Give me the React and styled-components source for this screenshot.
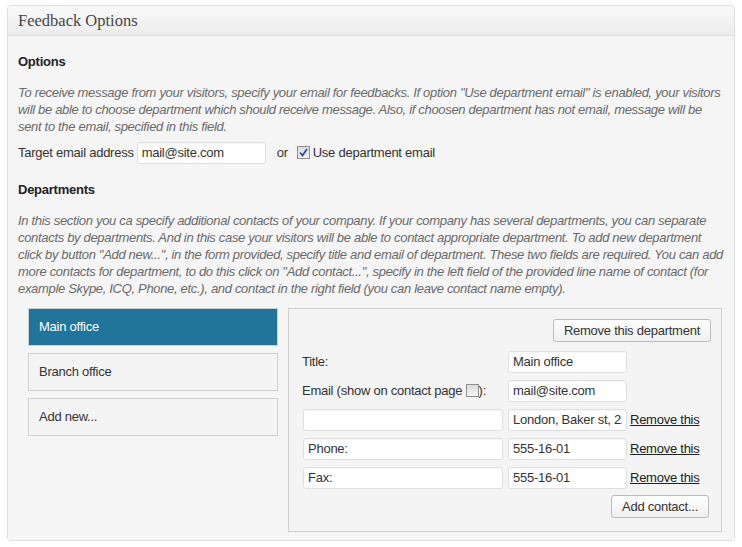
import React from "react";
import styled, { createGlobalStyle } from "styled-components";

const GlobalStyle = createGlobalStyle`
  body {
    margin: 0;
    background: #ffffff;
    font-family: "Liberation Sans", Arial, sans-serif;
    font-size: 13px;
    letter-spacing: -0.25px;
    color: #333;
  }
`;

const optionsText = [
  'To receive message from your visitors, specify your email for feedbacks. If option "Use department email" is enabled, your visitors',
  "will be able to choose department which should receive message. Also, if choosen department has not email, message will be",
  "sent to the email, specified in this field.",
];

const departmentsText = [
  "In this section you ca specify additional contacts of your company. If your company has several departments, you can separate",
  "contacts by departments. And in this case your visitors will be able to contact appropriate department. To add new department",
  'click by button "Add new...", in the form provided, specify title and email of department. These two fields are required. You can add',
  'more contacts for department, to do this click on "Add contact...", specify in the left field of the provided line name of contact (for',
  "example Skype, ICQ, Phone, etc.), and contact in the right field (you can leave contact name empty).",
];

const contacts = [
  { name: "", value: "London, Baker st, 221b" },
  { name: "Phone:", value: "555-16-01" },
  { name: "Fax:", value: "555-16-01" },
];

function Check({ checked }) {
  return (
    <CheckBox>
      {checked && (
        <svg width="9" height="9" viewBox="0 0 9 9">
          <path d="M1 4.5 L3.5 7.5 L8 1" fill="none" stroke="#2a4fa8" strokeWidth="1.8" />
        </svg>
      )}
    </CheckBox>
  );
}

function Description({ lines }) {
  return (
    <Desc>
      {lines.map((l, i) => (
        <Line key={i}>{l}</Line>
      ))}
    </Desc>
  );
}

export default function App() {
  return (
    <>
      <GlobalStyle />
      <Box>
        <Header>Feedback Options</Header>
        <Body>
          <Heading>Options</Heading>
          <Description lines={optionsText} />
          <TargetRow>
            <span>Target email address</span>
            <Input $width="129px" defaultValue="mail@site.com" />
            <Or>or</Or>
            <Check checked />
            <span>Use department email</span>
          </TargetRow>

          <Heading $top="18px">Departments</Heading>
          <Description lines={departmentsText} />

          <Departments>
            <Tabs>
              <Tab $active>Main office</Tab>
              <Tab>Branch office</Tab>
              <Tab>Add new...</Tab>
            </Tabs>
            <Panel>
              <TopBar>
                <Button>Remove this department</Button>
              </TopBar>
              <Grid>
                <Label>Title:</Label>
                <Input $width="119px" defaultValue="Main office" />
                <span />
                <Label>
                  Email (show on contact page <Check />):
                </Label>
                <Input $width="119px" defaultValue="mail@site.com" />
                <span />
                {contacts.map((c, i) => (
                  <React.Fragment key={i}>
                    <Input $width="200px" defaultValue={c.name} />
                    <Input $width="119px" defaultValue={c.value} />
                    <RemoveLink href="#">Remove this</RemoveLink>
                  </React.Fragment>
                ))}
              </Grid>
              <BottomBar>
                <Button>Add contact...</Button>
              </BottomBar>
            </Panel>
          </Departments>
        </Body>
      </Box>
    </>
  );
}

const Box = styled.div`
  margin: 5px 0 0 7px;
  width: 726px;
  border: 1px solid #dfdfdf;
  border-radius: 4px;
  background: #f7f7f7;
  box-shadow: 0 1px 1px rgba(0, 0, 0, 0.04);
`;

const Header = styled.div`
  height: 29px;
  line-height: 30px;
  padding-left: 10px;
  border-bottom: 1px solid #dfdfdf;
  background: linear-gradient(#f9f9f9, #ececec);
  border-radius: 4px 4px 0 0;
  font-family: "Liberation Serif", Georgia, serif;
  font-size: 16.5px;
  letter-spacing: 0;
  color: #464646;
`;

const Body = styled.div`
  padding: 18px 11px 8px 10px;
  background: #f5f5f5;
`;

const Heading = styled.div`
  margin-top: ${(p) => p.$top || "0"};
  font-weight: bold;
  font-size: 13px;
  line-height: 16px;
  color: #222;
`;

const Desc = styled.div`
  margin: 14px 0 0;
  font-style: italic;
  font-size: 13px;
  letter-spacing: -0.32px;
  line-height: 17.2px;
  color: #6a6a6a;
`;

const Line = styled.div`
  white-space: nowrap;
`;

const TargetRow = styled.div`
  display: flex;
  align-items: center;
  margin-top: 6px;
  gap: 3px;
  color: #333;
`;

const Or = styled.span`
  margin: 0 6px 0 8px;
`;

const Input = styled.input`
  box-sizing: border-box;
  width: ${(p) => p.$width};
  height: 22px;
  padding: 0 4px;
  border: 1px solid #dfdfdf;
  border-radius: 3px;
  background: #fff;
  font-family: "Liberation Sans", Arial, sans-serif;
  font-size: 13px;
  letter-spacing: -0.25px;
  color: #333;
  outline: none;
  box-shadow: inset 0 1px 1px rgba(0, 0, 0, 0.03);
`;

const CheckBox = styled.span`
  box-sizing: border-box;
  display: inline-flex;
  align-items: center;
  justify-content: center;
  width: 13px;
  height: 13px;
  border: 1px solid #8f8f8f;
  background: linear-gradient(#dcdcdc, #f4f4f4);
  vertical-align: -2px;
`;

const Departments = styled.div`
  display: flex;
  gap: 10px;
  margin: 10px 0 0 10px;
`;

const Tabs = styled.div`
  display: flex;
  flex-direction: column;
  gap: 7px;
  width: 250px;
`;

const Tab = styled.div`
  box-sizing: border-box;
  height: 38px;
  padding-left: 10px;
  display: flex;
  align-items: center;
  border: 1px solid #cfcfcf;
  background: ${(p) => (p.$active ? "#21759b" : "#f4f4f4")};
  color: ${(p) => (p.$active ? "#fff" : "#333")};
  font-size: 13px;
`;

const Panel = styled.div`
  box-sizing: border-box;
  width: 434px;
  height: 224px;
  border: 1px solid #cfcfcf;
  background: #f4f4f4;
  padding: 10px 10px 0 14px;
`;

const TopBar = styled.div`
  display: flex;
  justify-content: flex-end;
`;

const Button = styled.button`
  height: 23px;
  padding: 0 10px;
  border: 1px solid #bbb;
  border-radius: 3px;
  background: linear-gradient(#fefefe, #f0f0f0);
  font-family: "Liberation Sans", Arial, sans-serif;
  font-size: 13px;
  letter-spacing: -0.25px;
  color: #333;
`;

const Grid = styled.div`
  display: grid;
  grid-template-columns: 200px 119px auto;
  column-gap: 4px;
  row-gap: 7px;
  margin-top: 9px;
  align-items: center;
  & > input:nth-child(3n + 2) {
    margin-left: 1px;
  }
`;

const Label = styled.span`
  margin-left: -1px;
  color: #333;
`;

const RemoveLink = styled.a`
  color: #222;
  text-decoration: underline;
  font-size: 13px;
`;

const BottomBar = styled.div`
  display: flex;
  justify-content: flex-end;
  margin-top: 6px;
  padding-right: 2px;
`;
